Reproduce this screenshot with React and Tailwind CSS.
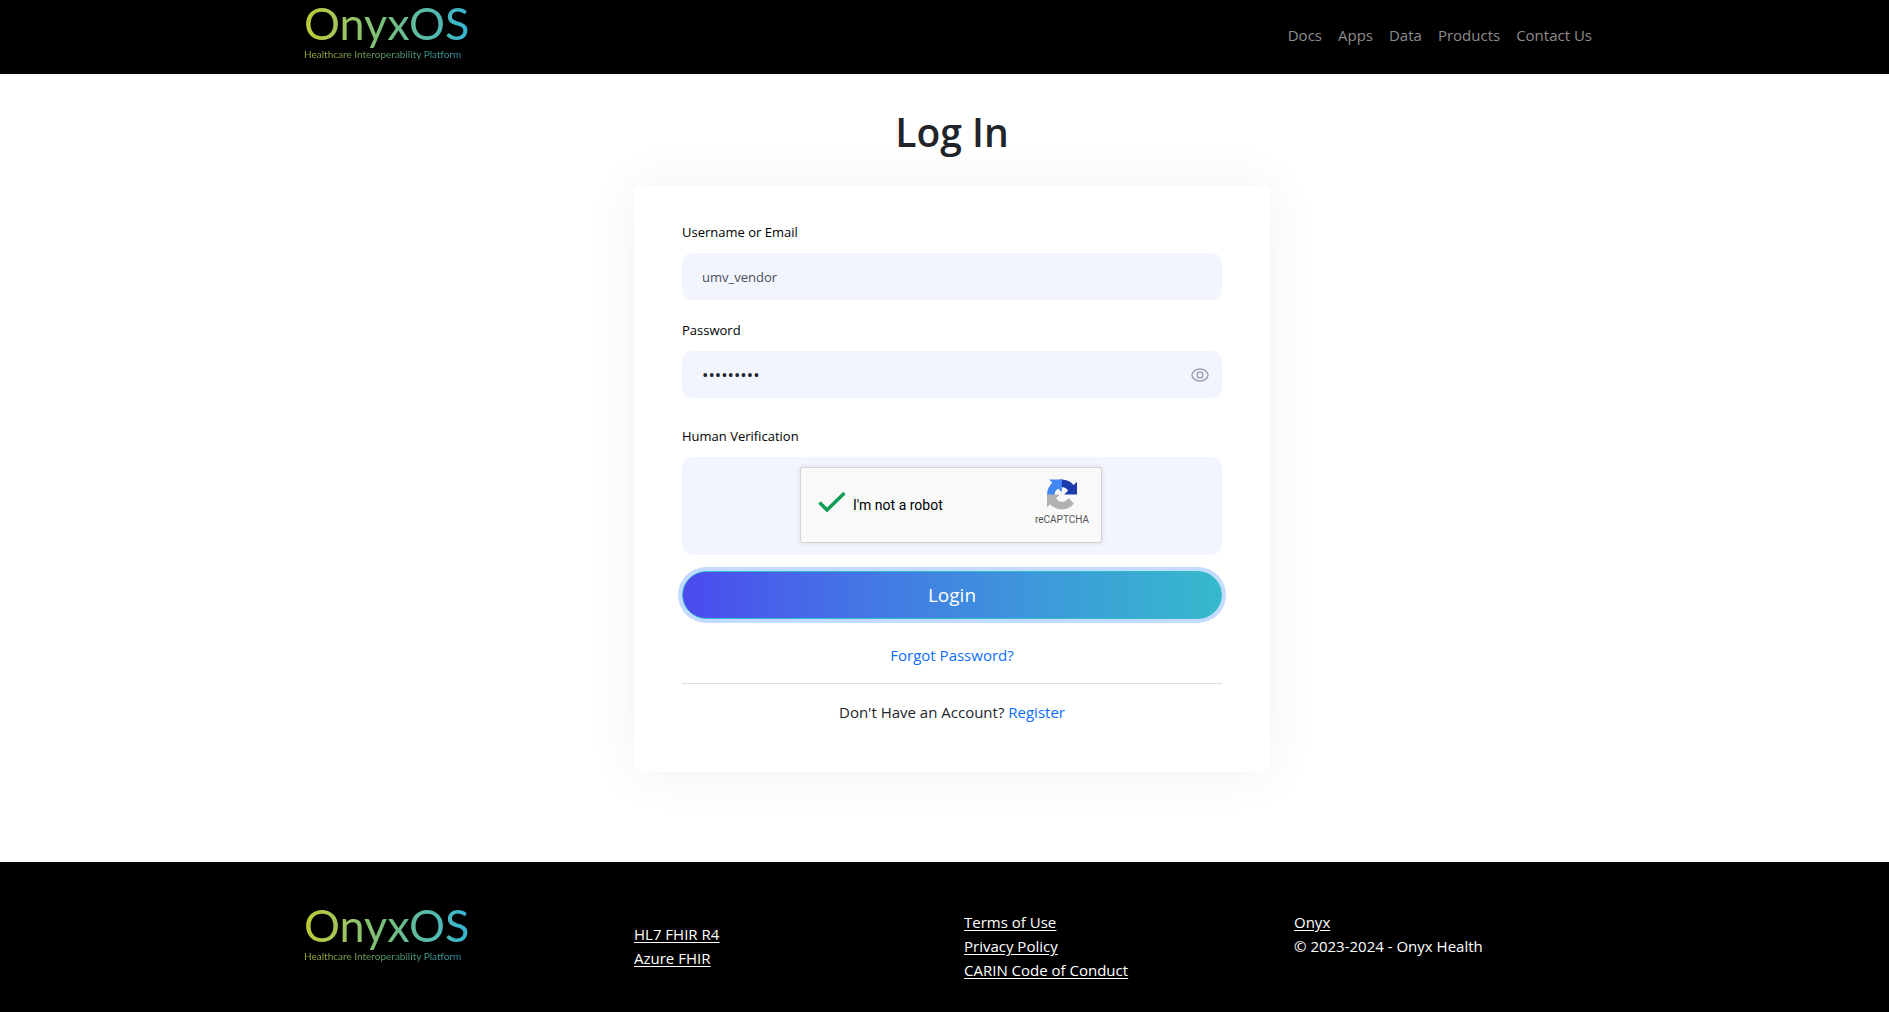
import React, { useState } from "react";

const navLinks = ["Docs", "Apps", "Data", "Products", "Contact Us"];

function Logo() {
  return (
    <a href="#" aria-label="OnyxOS" className="block w-[170px] font-['Lato']">
      <span className="-mt-1 -mb-1 block w-fit bg-linear-to-r from-[#bfcb2f] via-[#74be7c] to-[#33b5d2] bg-clip-text text-[45px] leading-[54px] text-transparent">
        OnyxOS
      </span>
      <span className="block w-fit bg-linear-to-r from-[#a3ac2b] via-[#5b9a62] to-[#2b93ab] bg-clip-text text-[10px] leading-4 whitespace-nowrap text-transparent">
        Healthcare Interoperability Platform
      </span>
    </a>
  );
}

function EyeIcon() {
  return (
    <svg width="18" height="14" viewBox="0 0 18 14" fill="none" stroke="#9ea2b0" strokeWidth="1.5">
      <path d="M1 7C1 4 4.6 1 9 1s8 3 8 6-3.600 6-8 6-8-3-8-6z" />
      <rect x="6.300" y="4.300" width="5.400" height="5.400" rx="2" />
    </svg>
  );
}

function RecaptchaLogo() {
  return (
    <svg width="30" height="31" viewBox="0 0 64 64">
      <path
        fill="#1c3aa9"
        d="M64 31.955l-.033-1.370V4.687l-7.160 7.160C50.948 4.674 42.033.093 32.050.093c-10.389 0-19.622 4.960-25.458 12.640l11.736 11.860a15.550 15.550 0 0 1 4.754-5.334c2.050-1.600 4.952-2.906 8.968-2.906.485 0 .860.057 1.135.163 4.976.393 9.288 3.140 11.828 7.124l-8.307 8.307L64 31.953"
      />
      <path
        fill="#4285f4"
        d="M31.862.094l-1.370.033H4.594l7.160 7.160C4.580 13.147 0 22.060 0 32.046c0 10.389 4.960 19.622 12.640 25.458L24.500 45.768a15.550 15.550 0 0 1-5.334-4.754c-1.600-2.050-2.906-4.952-2.906-8.968 0-.485.057-.860.163-1.135.393-4.976 3.140-9.288 7.124-11.828l8.307 8.307L31.860.095"
      />
      <path
        fill="#b1b1b1"
        d="M.001 32.045l.033 1.370v25.898l7.160-7.160c5.860 7.173 14.774 11.754 24.760 11.754 10.389 0 19.622-4.960 25.458-12.640l-11.736-11.860a15.550 15.550 0 0 1-4.754 5.334c-2.050 1.600-4.952 2.906-8.968 2.906-.485 0-.860-.057-1.135-.163-4.976-.393-9.288-3.140-11.828-7.124l8.307-8.307L.003 32.046"
      />
    </svg>
  );
}

function Recaptcha() {
  return (
    <div className="flex h-[76px] w-[302px] items-center rounded-[3px] border border-[#d3d3d3] bg-[#f9f9f9] pr-3 pl-[17px] shadow-[0_0_4px_1px_rgba(0,0,0,0.08)]">
      <svg className="mb-[6px]" width="28" height="22" viewBox="0 0 28 22" fill="none">
        <path d="M1.500 11.500L9 19 26.500 2" stroke="#0f9d58" strokeWidth="3.500" />
      </svg>
      <span className="ml-[7px] font-['Roboto'] text-sm text-black">I'm not a robot</span>
      <div className="mb-[6px] ml-auto flex flex-col items-center gap-1">
        <RecaptchaLogo />
        <span className="font-['Roboto'] text-[10px] leading-3 text-[#555]">reCAPTCHA</span>
      </div>
    </div>
  );
}

export default function App() {
  const [username, setUsername] = useState("umv_vendor");
  const [password, setPassword] = useState("password1");
  const [visible, setVisible] = useState(false);

  return (
    <div className="flex min-h-screen flex-col bg-white font-['Open_Sans',sans-serif] text-[15px] leading-6 text-[#212529]">
      {/* Navbar */}
      <header className="bg-black pl-[15px]">
        <div className="mx-auto flex h-[74px] max-w-[1320px] justify-between px-3">
          <Logo />
          <nav className="flex items-center gap-4 pr-2 pb-1 text-[#8c8c8c]">
            {navLinks.map((link) => (
              <a key={link} href="#">
                {link}
              </a>
            ))}
          </nav>
        </div>
      </header>

      {/* Login form */}
      <main className="flex flex-col items-center pb-[90px] pl-[15px]">
        <h1 className="mt-[34px] mb-[30px] text-[39px] leading-12 font-semibold">Log In</h1>
        <form
          onSubmit={(e) => e.preventDefault()}
          className="w-full max-w-[636px] rounded-lg bg-white px-12 pt-[34px] pb-12 shadow-[0_0_50px_rgba(51,51,51,0.07)]"
        >
          <label htmlFor="username" className="block text-[13px] text-black">
            Username or Email
          </label>
          <input
            id="username"
            type="text"
            value={username}
            onChange={(e) => setUsername(e.target.value)}
            className="mt-[9px] block h-[47px] w-full rounded-[10px] bg-[#f2f5fe] px-5 text-[13px] text-[#495057] outline-none"
          />

          <label htmlFor="password" className="mt-[18px] block text-[13px] text-black">
            Password
          </label>
          <div className="mt-[9px] flex h-[47px] items-center rounded-[10px] bg-[#f2f5fe] pr-[13px] pl-5">
            <input
              id="password"
              type={visible ? "text" : "password"}
              value={password}
              onChange={(e) => setPassword(e.target.value)}
              className="min-w-0 flex-1 bg-transparent text-[17px] text-[#212529] outline-none"
            />
            <button type="button" aria-label="Show password" onClick={() => setVisible(!visible)}>
              <EyeIcon />
            </button>
          </div>

          <p className="mt-[26px] text-[13px] leading-6 text-black">Human Verification</p>
          <div className="mt-[9px] flex h-[98px] justify-center rounded-[10px] bg-[#f2f5fe] pt-[10px] pr-[2px]">
            <Recaptcha />
          </div>

          <button
            type="submit"
            className="mt-4 block h-12 w-full rounded-full border border-[#36b9cc] bg-linear-to-r from-[#4b49ee] to-[#36b9cc] text-[19px] text-white shadow-[0_0_0_4px_#c2dbfe]"
          >
            Login
          </button>

          <div className="mt-6 border-b border-[#dcdddd] pb-4 text-center">
            <a href="#" className="text-[#0d6efd]">
              Forgot Password?
            </a>
          </div>
          <p className="mt-4 text-center">
            Don't Have an Account?{" "}
            <a href="#" className="text-[#0d6efd]">
              Register
            </a>
          </p>
        </form>
      </main>

      {/* Footer */}
      <footer className="grow bg-black pl-[15px] text-white">
        <div className="mx-auto grid max-w-[1320px] grid-cols-4 pt-10 pb-6">
          <div className="px-3">
            <Logo />
          </div>
          <div className="flex flex-col items-start px-3 pt-5 underline underline-offset-2">
            <a href="#">HL7 FHIR R4</a>
            <a href="#">Azure FHIR</a>
          </div>
          <div className="flex flex-col items-start px-3 pt-2 underline underline-offset-2">
            <a href="#">Terms of Use</a>
            <a href="#">Privacy Policy</a>
            <a href="#">CARIN Code of Conduct</a>
          </div>
          <div className="flex flex-col items-start px-3 pt-2">
            <a href="#" className="underline underline-offset-2">
              Onyx
            </a>
            <p>© 2023-2024 - Onyx Health</p>
          </div>
        </div>
      </footer>
    </div>
  );
}
